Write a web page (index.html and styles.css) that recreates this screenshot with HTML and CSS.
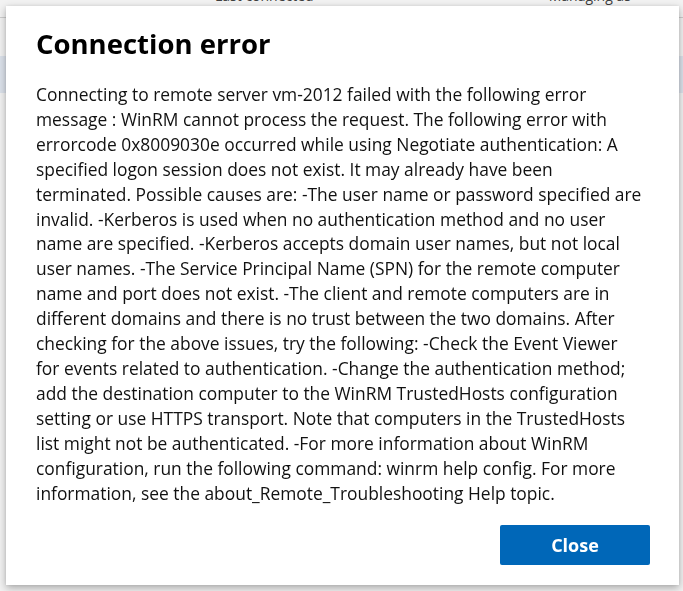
FILE: index.html
```html
<!DOCTYPE html>
<html lang="en">
<head>
<meta charset="utf-8">
<title>Connection error</title>
<link rel="stylesheet" href="styles.css">
</head>
<body>
<div class="page">
  <div class="table-head">
    <span class="col col-last">Last connected</span>
    <span class="col col-managing">Managing as</span>
  </div>
  <div class="row"></div>
  <div class="row row-selected"></div>
  <div class="row"></div>
</div>
<div class="overlay"></div>
<div class="dialog" role="dialog" aria-labelledby="dlg-title">
  <h1 class="dialog-title" id="dlg-title">Connection error</h1>
  <p class="dialog-body">Connecting to remote server vm-2012 failed with the following error<br>
message : WinRM cannot process the request. The following error with<br>
errorcode 0x8009030e occurred while using Negotiate authentication: A<br>
specified logon session does not exist. It may already have been<br>
terminated. Possible causes are: -The user name or password specified are<br>
invalid. -Kerberos is used when no authentication method and no user<br>
name are specified. -Kerberos accepts domain user names, but not local<br>
user names. -The Service Principal Name (SPN) for the remote computer<br>
name and port does not exist. -The client and remote computers are in<br>
different domains and there is no trust between the two domains. After<br>
checking for the above issues, try the following: -Check the Event Viewer<br>
for events related to authentication. -Change the authentication method;<br>
add the destination computer to the WinRM TrustedHosts configuration<br>
setting or use HTTPS transport. Note that computers in the TrustedHosts<br>
list might not be authenticated. -For more information about WinRM<br>
configuration, run the following command: winrm help config. For more<br>
information, see the about_Remote_Troubleshooting Help topic.</p>
  <div class="dialog-actions">
    <button class="btn-primary" type="button">Close</button>
  </div>
</div>
</body>
</html>
```

FILE: styles.css
```css
* { box-sizing: border-box; }
html, body {
  margin: 0;
  padding: 0;
  width: 683px;
  height: 591px;
  overflow: hidden;
  font-family: "Open Sans", "Noto Sans", sans-serif;
  background: #ffffff;
}
.page {
  width: 683px;
  height: 591px;
}
.table-head {
  display: flex;
  align-items: flex-start;
  height: 30px;
  margin-top: -12px;
  border-bottom: 1px solid #d8d8d8;
  font-size: 14px;
  line-height: 16px;
  color: #444;
}
.col-last { margin-left: 215px; }
.col-managing { margin-left: 235px; }
.row {
  height: 38px;
}
.row-selected {
  height: 37px;
  background: #e8eff8;
}
.overlay {
  position: fixed;
  inset: 0;
  background: rgba(0, 0, 0, 0.05);
}
.dialog {
  position: absolute;
  left: 6px;
  top: 6px;
  width: 673px;
  height: 579px;
  background: #ffffff;
  box-shadow: 0 3px 8px rgba(0, 0, 0, 0.3), 0 0 3px rgba(0, 0, 0, 0.08);
  padding: 20px 29px 20px 30px;
  display: flex;
  flex-direction: column;
}
.dialog-title {
  margin: 0;
  font-size: 27.5px;
  line-height: 36px;
  font-weight: 700;
  color: #000;
}
.dialog-body {
  margin: 20px 0 0 0;
  width: 614px;
  white-space: nowrap;
  font-size: 17.4px;
  line-height: 24.9px;
  color: #111;
}
.dialog-actions {
  margin-top: auto;
  display: flex;
  justify-content: flex-end;
}
.btn-primary {
  width: 150px;
  height: 40px;
  background: #0067b8;
  color: #fff;
  border: none;
  border-radius: 2px;
  font-family: inherit;
  font-weight: 700;
  font-size: 18px;
  cursor: pointer;
}
```
